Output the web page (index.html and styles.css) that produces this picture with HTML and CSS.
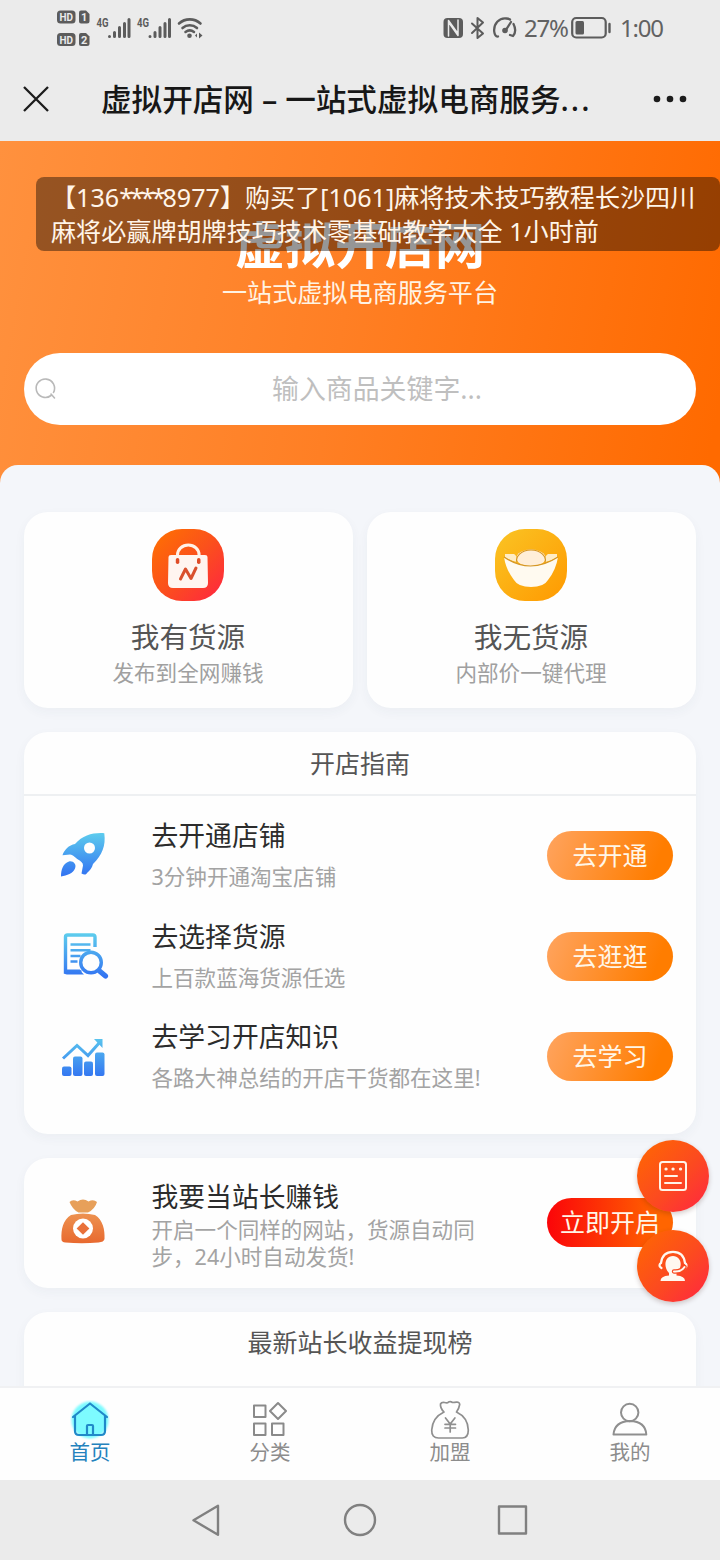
FILE: index.html
```
<!DOCTYPE html>
<html lang="zh-CN">
<head>
<meta charset="utf-8">
<title>虚拟开店网</title>
<link rel="stylesheet" href="styles.css">
</head>
<body>
<div class="phone">
  <header class="status">
    <div class="status-left">
      <svg width="146" height="42" viewBox="0 0 146 42" fill="#5c5c5c">
        <rect x="0" y="0.500" width="18.500" height="13" rx="3.500"/><path d="M24 .5h5l3.500 3.500v7a2.500 2.500 0 0 1-2.500 2.500h-6a2 2 0 0 1-2-2v-9a2 2 0 0 1 2-2z"/>
        <rect x="0" y="23" width="18.500" height="13" rx="3.500"/><path d="M24 23h5l3.500 3.500v7a2.500 2.500 0 0 1-2.500 2.500h-6a2 2 0 0 1-2-2v-9a2 2 0 0 1 2-2z"/>
        <g class="chip-text"><text x="2.500" y="11" textLength="13.500" lengthAdjust="spacingAndGlyphs">HD</text><text x="24" y="11">1</text><text x="2.500" y="33.500" textLength="13.500" lengthAdjust="spacingAndGlyphs">HD</text><text x="24" y="33.500">2</text></g>
        <g class="net-text"><text x="39.500" y="17" textLength="12" lengthAdjust="spacingAndGlyphs">4G</text><text x="80" y="17" textLength="12" lengthAdjust="spacingAndGlyphs">4G</text></g>
        <g stroke="#5c5c5c" stroke-width="3" stroke-linecap="round"><path d="M52.500 26.500v.1M57.500 26.500v-4M62.500 26.500v-9M67.500 26.500v-13M72 26.500v-17M93 26.500v.1M98 26.500v-4M103 26.500v-9M108 26.500v-13M112.500 26.500v-17"/></g>
        <g fill="none" stroke="#5c5c5c" stroke-width="2.600" stroke-linecap="round"><path d="M122 13.500a16 16 0 0 1 21.500 0M125.500 18a11 11 0 0 1 14.500 0M128.500 22a7 7 0 0 1 8.500 0"/></g>
        <circle cx="132.500" cy="25.800" r="2.300"/><path d="M142 22.500l3.500 3-3.500 3zM140 23.500v4l-2-2z"/>
      </svg>
    </div>
    <div class="status-right">
      <svg width="76" height="24" viewBox="0 0 76 24" fill="none" stroke="#5c5c5c" stroke-width="2" stroke-linecap="round" stroke-linejoin="round">
        <rect x="0.500" y="2" width="19.500" height="20" rx="4" fill="#5c5c5c" stroke="none"/>
        <path d="M5.500 20V4.500l9 12.500M15 4v15.500L6.500 7.500" stroke="#ebebeb" stroke-width="1.500"/>
        <path d="M29 7.500l11 10-5.500 4.500V2l5.500 4.500-11 10.500"/>
        <path d="M55 20.500c-2 .5-3.500-2-3.800-5C50.500 8 56 1.500 63.500 2.500q2.500.3 3.500 1M70.500 8c2 4 2.500 8.500-.5 12l-3-1M62.500 14.500l5.500-8.500" stroke-width="2.300"/><circle cx="62" cy="14.500" r="2.800" fill="#5c5c5c" stroke="none"/>
      </svg>
      <span class="percent">27%</span>
      <svg width="40" height="24" viewBox="0 0 40 24" fill="none" stroke="#5c5c5c"><rect x="1.200" y="2" width="33.500" height="19.500" rx="4" stroke-width="2.200"/><rect x="4.500" y="5" width="8.500" height="13.500" rx="1.500" fill="#5c5c5c" stroke="none"/><path d="M38.500 8v8" stroke-width="2.400" stroke-linecap="round"/></svg>
      <span class="clock">1:00</span>
    </div>
  </header>
  <div class="titlebar">
    <svg class="close" width="28" height="28" viewBox="0 0 28 28"><path d="M2 2l24 24M26 2L2 26" stroke="#1c1c1c" stroke-width="2.300"/></svg>
    <h1>虚拟开店网 – 一站式虚拟电商服务<span class="dots">...</span></h1>
    <svg class="more" width="34" height="8" viewBox="0 0 34 8" fill="#1c1c1c"><circle cx="4" cy="4" r="3.300"/><circle cx="17" cy="4" r="3.300"/><circle cx="30" cy="4" r="3.300"/></svg>
  </div>
  <main class="view">
    <section class="hero">
      <h2>虚拟开店网</h2>
      <p>一站式虚拟电商服务平台</p>
      <div class="search">
        <svg width="24" height="24" viewBox="0 0 24 24" fill="none" stroke="#b9b9b9" stroke-width="1.600" stroke-linecap="round"><path d="M17 18.500A9.200 9.200 0 1 1 19.500 15.500M17 17l3.500 4"/></svg>
        <span>输入商品关键字...</span>
      </div>
    </section>
    <section class="sheet">
      <div class="sources">
        <article class="card source">
          <svg width="72" height="72" viewBox="0 0 72 72">
            <defs><linearGradient id="red" x1="0" y1="0" x2="1" y2="1"><stop offset="0" stop-color="#ff7300"/><stop offset=".5" stop-color="#fb501c"/><stop offset="1" stop-color="#ff2442"/></linearGradient></defs>
            <rect width="72" height="72" rx="30" fill="url(#red)"/>
            <path d="M25.500 28v-2a10.800 10 0 0 1 21.600 0v2" fill="none" stroke="#fff1e8" stroke-width="3"/>
            <path d="M19 26h34q2.500 0 2.500 2l.5 26q0 5-5 5H21q-5 0-5-5l.5-26q0-2 2.500-2z" fill="#fff5f0"/>
            <rect x="23.800" y="29" width="3.500" height="6" rx="1.700" fill="#df4b26"/><rect x="45" y="29" width="3.500" height="6" rx="1.700" fill="#df4b26"/>
            <path d="M28.500 50l5-10 5.500 9.500 5-10.500" fill="none" stroke="#d9502d" stroke-width="3" stroke-linecap="round" stroke-linejoin="round"/>
          </svg>
          <h3>我有货源</h3><p>发布到全网赚钱</p>
        </article>
        <article class="card source">
          <svg width="72" height="72" viewBox="0 0 72 72">
            <defs><linearGradient id="gold" x1="0" y1="0" x2="1" y2="1"><stop offset="0" stop-color="#fac424"/><stop offset="1" stop-color="#ff9900"/></linearGradient></defs>
            <rect width="72" height="72" rx="30" fill="url(#gold)"/>
            <path d="M10 25h9q3 1 3 8-7-1-12-5zM62 25h-9q-3 1-3 8 7-1 12-5z" fill="#ffecc5"/>
            <ellipse cx="36" cy="29" rx="14.500" ry="8.500" fill="#ffeed9"/>
            <path d="M9 28q26 18 54 0-2 13-10 23-4 7-17 7t-17-7Q11 41 9 28z" fill="#fffaf0"/>
            <path d="M9 28q26 18 54 0M22 33c-2-5 4-12 14-12s16 7 14 12" fill="none" stroke="#d59726" stroke-width="1.200"/>
          </svg>
          <h3>我无货源</h3><p>内部价一键代理</p>
        </article>
      </div>
      <div class="card guide">
        <h4>开店指南</h4>
        <div class="steps">
          <div class="row">
            <svg width="48" height="48" viewBox="0 0 48 48">
              <defs><linearGradient id="blue" x1="0" y1="0" x2="0" y2="48" gradientUnits="userSpaceOnUse"><stop offset="0" stop-color="#5fd0ed"/><stop offset="1" stop-color="#2f6df2"/></linearGradient></defs>
              <path fill="url(#blue)" fill-rule="evenodd" d="M45.300 2.200C34 1.500 24 4 16 13 10 14 5 19 3.500 24.200L11 23.500c3 .5 4 2 8 5 3 2 5 3 5 6l-1.500 8C25 44 27 44 28 42c3-3 5-5 6-9 9-9 13-18 11.300-30.800zM30.500 11.500a5.500 5.500 0 1 1 0 11 5.500 5.500 0 0 1 0-11z"/>
              <path fill="url(#blue)" d="M2 45.500c0-7 2-13 8-15 4-1 8 3 6 7-2 5-8 7-14 8z"/>
            </svg>
            <div class="copy"><h5>去开通店铺</h5><p>3分钟开通淘宝店铺</p></div><span class="button">去开通</span>
          </div>
          <div class="row">
            <svg class="wide" width="50" height="48" viewBox="0 0 50 48" fill="none" stroke="url(#blue)">
              <path d="M36 15V5q0-2-2-2H8.500q-2 0-2 2v35h16" stroke-width="3.400"/><path d="M5 37.500h16q1 3 4 5H8q-3 0-3-3z" fill="url(#blue)" stroke="none"/>
              <path d="M11.500 12.500h20M11.500 18.200h20M11.500 24h10M11.500 29.500h7" stroke-width="2.600"/>
              <circle cx="32" cy="30.500" r="10.300" stroke-width="3.400"/><path d="M40.500 39l6 5" stroke-width="5.200" stroke-linecap="round"/>
            </svg>
            <div class="copy"><h5>去选择货源</h5><p>上百款蓝海货源任选</p></div><span class="button">去逛逛</span>
          </div>
          <div class="row">
            <svg width="48" height="48" viewBox="0 0 48 48" fill="url(#blue)">
              <rect x="3" y="33.500" width="9.500" height="9.500" rx="2"/><rect x="14" y="23.500" width="9.500" height="19.500" rx="2"/><rect x="25" y="28.500" width="9" height="14.500" rx="2"/><rect x="36" y="19.500" width="9.500" height="23.500" rx="2"/>
              <path d="M4 25.500l14-13 11 10L41 9" fill="none" stroke="url(#blue)" stroke-width="3"/><path d="M35 6h8.500v9z"/>
            </svg>
            <div class="copy"><h5>去学习开店知识</h5><p>各路大神总结的开店干货都在这里!</p></div><span class="button">去学习</span>
          </div>
        </div>
      </div>
      <div class="card owner row">
        <svg width="48" height="48" viewBox="0 0 48 48">
          <defs><linearGradient id="bag" x1="0" y1="0" x2="0" y2="1"><stop offset="0" stop-color="#ed9250"/><stop offset="1" stop-color="#e8692f"/></linearGradient></defs>
          <path d="M10.500 4q3-3 8-.5 5.500-4 11 0 5-2.500 8.500.5-2 7-9 10.500h-9.500q-6-3-9-10.500z" fill="#e7a05a"/>
          <path d="M12 17q12-3 24 0c8 5 10 15 9.500 24q-.5 3-6 3.500-17 1.500-33 0-4-.5-4-3C2 31 4 22 12 17z" fill="url(#bag)"/>
          <circle cx="24" cy="30.500" r="10" fill="#fff"/><rect x="19.500" y="26" width="9" height="9" transform="rotate(45 24 30.500)" fill="#e9713a"/>
        </svg>
        <div class="copy"><h5>我要当站长赚钱</h5><p>开启一个同样的网站，货源自动同<br>步，24小时自动发货!</p></div><span class="button hot">立即开启</span>
      </div>
      <div class="card ranking"><h4>最新站长收益提现榜</h4></div>
    </section>
    <div class="toast">【136<span class="mask">****</span>8977】购买了[1061]麻将技术技巧教程长沙四川<br>麻将必赢牌胡牌技巧技术零基础教学大全 1小时前</div>
    <div class="floats">
      <span class="float"><svg width="32" height="32" viewBox="0 0 32 32" fill="none" stroke="#fff4e8" stroke-width="2" stroke-linecap="round"><rect x="3" y="2" width="26" height="28" rx="2.500"/><path d="M8 16h12M8 23h16"/><path d="M9 9h.1M16 9h.1M23.500 9h.1" stroke-width="3.200"/></svg></span>
      <span class="float"><svg width="32" height="32" viewBox="0 0 32 32" fill="#fff8f0"><path d="M16 6c5.500 0 8.500 5 7.500 10-1 5-3 7-4 7v2.500q8.500.5 8.500 5.500H3.500q0-5 8.500-5.500V23C6.500 18 7 6 16 6z"/><path d="M4.500 18C1 16 3 13.500 4 13 5 5 10 1.800 16 1.800S27 5 28 13c1 .5 3 3 0 5" fill="none" stroke="#fff8f0" stroke-width="2.200" stroke-linecap="round"/><path d="M27.500 17q-3 5-10.500 4.500" fill="none" stroke="#fa4a20" stroke-width="4.400" stroke-linecap="round"/><path d="M27.500 17q-3 5-10.500 4.500" fill="none" stroke="#fff8f0" stroke-width="2" stroke-linecap="round"/></svg></span>
    </div>
  </main>
  <nav class="tabs">
    <span class="tab active"><svg width="40" height="40" viewBox="0 0 40 40" fill="none" stroke="#2089c9" stroke-width="2.200" stroke-linejoin="round" stroke-linecap="round"><circle class="glow" cx="20" cy="20" r="18.500"/><path d="M3 17L20 3.500 37 17M5 16v15q0 4 4 4h22q4 0 4-4V16M17 35V26q0-1 1-1h4q1 0 1 1v9"/></svg>首页</span>
    <span class="tab"><svg width="40" height="40" viewBox="0 0 40 40" fill="none" stroke="#8a8a8a" stroke-width="2" stroke-linejoin="round"><path d="M4 5.500h11.500v11.500H4zM4 23.500h11.500V35H4zM22 23.500h11.500V35H22zM28 3l8 8-8 8-8-8z"/></svg>分类</span>
    <span class="tab"><svg width="40" height="40" viewBox="0 0 40 40" fill="none" stroke="#8f8f8f" stroke-width="1.700" stroke-linejoin="round" stroke-linecap="round"><path d="M14 12q-4-4-3.500-8 1-2 4-1.500 3 1 4-.5 2-1 4 .5 2 0 4-.3 3-.3 3.200 2.300Q29 8.500 26.500 12 38 17.500 38.300 30q0 8-6 8H8.500q-7 0-6.800-8Q2.500 17.500 14 12M15.500 18l4.700 6 4.700-6M20.200 24v8M15 24.300h10.500M15 28h10.500"/></svg>加盟</span>
    <span class="tab"><svg width="40" height="40" viewBox="0 0 40 40" fill="none" stroke="#8f8f8f" stroke-width="2" stroke-linejoin="round"><circle cx="19.700" cy="12.500" r="8.700"/><path d="M3.500 34.500q1-13 16.500-13.500 15.500.5 16.300 13.500z"/></svg>我的</span>
  </nav>
  <footer class="sysnav"><svg width="340" height="40" viewBox="0 0 340 40" fill="none" stroke="#808080" stroke-width="2.400" stroke-linejoin="round"><path d="M3.500 20.300l24.500-14.500v29z"/><circle cx="170" cy="20" r="15"/><rect x="309" y="6.500" width="27" height="27"/></svg></footer>
</div>
</body>
</html>
```
FILE: styles.css
```
* { box-sizing: border-box; margin: 0; padding: 0; font-weight: inherit; }
body { background: #ebebeb; font-family: "Noto Sans", "Noto Sans CJK SC", sans-serif; font-weight: 400; }
svg { display: block; flex: none; }
.phone { width: 720px; height: 1560px; display: flex; flex-direction: column; overflow: hidden; }

.status { height: 56px; display: flex; justify-content: space-between; padding: 10px 58px 0 57px; flex: none; }
.status-right { display: flex; align-items: center; height: 36px; gap: 5px; color: #626262; font-size: 24px; line-height: 36px; white-space: nowrap; }
.percent { width: 42px; letter-spacing: -1.2px; }
.clock { width: 42px; margin-left: 4px; letter-spacing: -1.2px; }
.chip-text { fill: #ebebeb; font: bold 11px Roboto, sans-serif; }
.net-text { font: bold 13px Roboto, sans-serif; }

.titlebar { height: 85px; flex: none; display: flex; align-items: center; padding: 0 33px 0 22px; }
.titlebar h1 { flex: 1; margin-left: 51px; color: #171717; font-size: 30.600px; font-weight: 500; line-height: 44px; white-space: nowrap; }
.dots { letter-spacing: 2px; }

.view { position: relative; flex: 1; min-height: 0; overflow: hidden; background: #f4f6fa; }
.hero { height: 348px; display: flex; flex-direction: column; align-items: center; padding: 74px 24px 0; background: linear-gradient(100deg, #ff913e 0%, #ff7f24 48%, #ff6a00 98%); color: #fff; text-align: center; }
.hero h2 { font-size: 50px; font-weight: 700; line-height: 60px; }
.hero p { font-size: 25.100px; line-height: 34px; color: #fff3e3; }
.search { width: 100%; height: 72px; margin-top: 44px; border-radius: 36px; background: #fff; display: flex; align-items: center; padding: 0 12px 0 10px; color: #bfbfbf; font-size: 26.900px; }
.search span { flex: 1; padding-left: 12px; line-height: 40px; }

.sheet { position: relative; margin-top: -24px; padding: 47px 24px 0; border-radius: 18px 18px 0 0; background: #f4f6fa; display: flex; flex-direction: column; gap: 24px; }
.card { background: #fefefe; border-radius: 24px; box-shadow: 0 4px 12px rgba(40, 60, 90, .045); }
.sources { display: flex; gap: 14px; }
.source { flex: 1; height: 196px; padding: 17px 1px 0 0; display: flex; flex-direction: column; align-items: center; }
.source h3 { margin-top: 16px; color: #555; font-size: 28.600px; line-height: 40px; }
.source p { color: #a0a0a0; font-size: 21.600px; line-height: 32px; }

.card h4 { height: 64px; border-bottom: 2px solid #eef0f2; text-align: center; color: #555; font-size: 25px; line-height: 62px; }
.guide { height: 402px; }
.steps { padding: 9px 23px 0 24px; }
.row { display: flex; align-items: center; }
.steps .row { height: 100.700px; padding-left: 11px; }
.row .copy { flex: 1; margin-left: 44.500px; white-space: nowrap; }
.row .wide + .copy { margin-left: 42.500px; }
.copy h5 { color: #2c2c2c; font-size: 26.800px; line-height: 40px; }
.copy p { color: #a3a3a3; font-size: 21.550px; line-height: 28px; }
.steps h5 { margin-top: -4px; }
.steps p { margin-top: 7px; }
.button { width: 126px; height: 49px; flex: none; border-radius: 25px; color: #fff6e8; background: linear-gradient(110deg, #ffa45f, #ff7d00 85%); font-size: 25px; line-height: 48px; text-align: center; }
.button.hot { background: linear-gradient(90deg, #fb0509, #ff6500 90%); }
.owner { height: 130px; padding: 0 23px 2px 35px; }
.owner h5 { margin-top: 2px; line-height: 38px; }
.owner p { line-height: 27px; margin-bottom: -2px; }
.ranking { height: 180px; }
.ranking h4 { border-bottom: 0; line-height: 60px; }

.toast { position: absolute; left: 36px; top: 36px; width: 684px; height: 74px; padding: 4px 0 0 15px; border-radius: 8px; background: rgba(0, 0, 0, .41); color: #fff5e9; font-size: 25.100px; line-height: 33.500px; white-space: nowrap; }
.mask { letter-spacing: -3px; }
.floats { position: absolute; right: 11px; top: 999px; display: flex; flex-direction: column; gap: 18px; }
.float { width: 72px; height: 72px; border-radius: 50%; display: flex; align-items: center; justify-content: center; background: linear-gradient(135deg, #ff6900, #fc4a20 55%, #ff2542); box-shadow: 0 2px 5px rgba(60, 20, 10, .22); }

.tabs { height: 94px; flex: none; display: flex; border-top: 2px solid #f0f1f3; background: #fefefe; }
.tab { flex: 1; display: flex; flex-direction: column; align-items: center; padding-top: 12px; color: #8c8c8c; font-size: 20.500px; line-height: 25px; }
.active { color: #2482bd; }
.glow { fill: #7dfbff; stroke: none; filter: blur(1.200px); }
.sysnav { height: 80px; flex: none; display: flex; justify-content: center; align-items: center; background: #ebebeb; }
```
